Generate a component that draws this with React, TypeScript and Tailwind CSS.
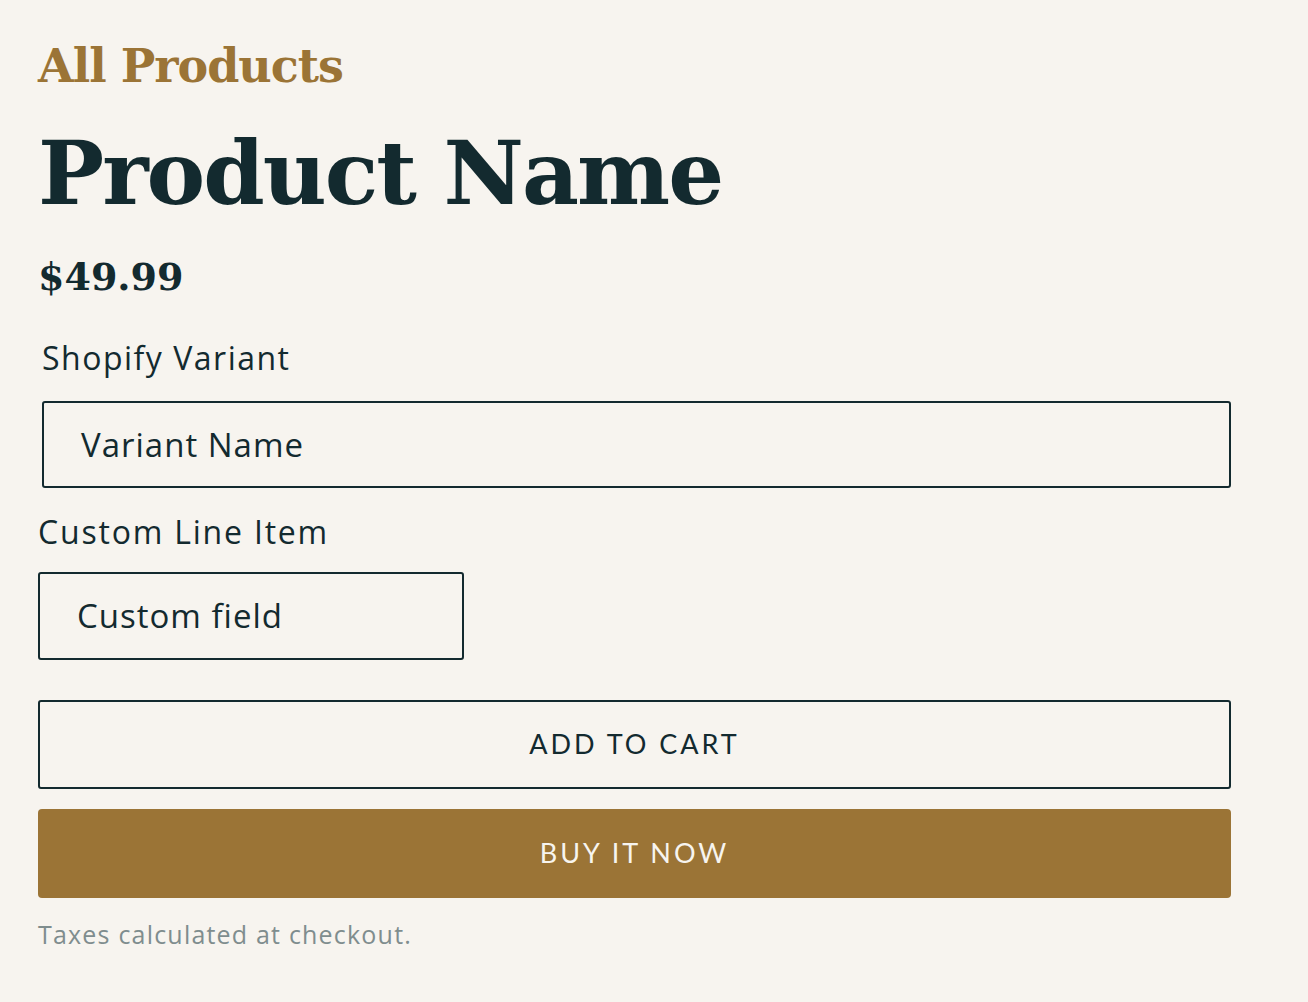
export default function App() {
  return (
    <div className="min-h-screen bg-[#f7f4ef] text-[#132a2f] pl-[38px] pr-[77px] pt-[36px] pb-10">
      <h2 className="font-['DejaVu_Serif',serif] font-bold text-[46px] leading-[60px] text-[#9b7436] tracking-[-1px]">
        All Products
      </h2>
      <h1 className="font-['DejaVu_Serif',serif] font-bold text-[88px] leading-[116px] tracking-[-2px] mt-[19px]">
        Product Name
      </h1>
      <p className="font-['DejaVu_Serif',serif] font-bold text-[38px] leading-[50px] mt-[21px]">$49.99</p>

      <div className="font-['Open_Sans',sans-serif]">
        <div className="pl-[4px] mt-[36px]">
          <label className="block text-[32px] leading-[40px] tracking-[1.5px]">Shopify Variant</label>
          <div className="mt-[23px] h-[87px] border-2 border-[#132a2f] rounded-[3px] flex items-center pl-[37px] text-[33px] tracking-[1px]">
            Variant Name
          </div>
        </div>

        <label className="block text-[32px] leading-[40px] mt-[24px] tracking-[1.8px]">Custom Line Item</label>
        <div className="mt-[20px] w-[426px] h-[88px] border-2 border-[#132a2f] rounded-[3px] flex items-center pl-[37px] text-[33px] tracking-[1px]">
          Custom field
        </div>

        <button className="font-['Lato',sans-serif] mt-[40px] w-full h-[89px] border-2 border-[#132a2f] rounded-[3px] text-[27px] tracking-[3px] flex items-center justify-center">
          ADD TO CART
        </button>
        <button className="font-['Lato',sans-serif] mt-[20px] w-full h-[89px] bg-[#9b7436] rounded-[4px] text-[27px] tracking-[3px] text-[#f7f4ef] flex items-center justify-center">
          BUY IT NOW
        </button>

        <p className="mt-[20px] text-[25px] leading-[32px] text-[#7f8d8e] tracking-[1.2px]">Taxes calculated at checkout.</p>
      </div>
    </div>
  );
}
